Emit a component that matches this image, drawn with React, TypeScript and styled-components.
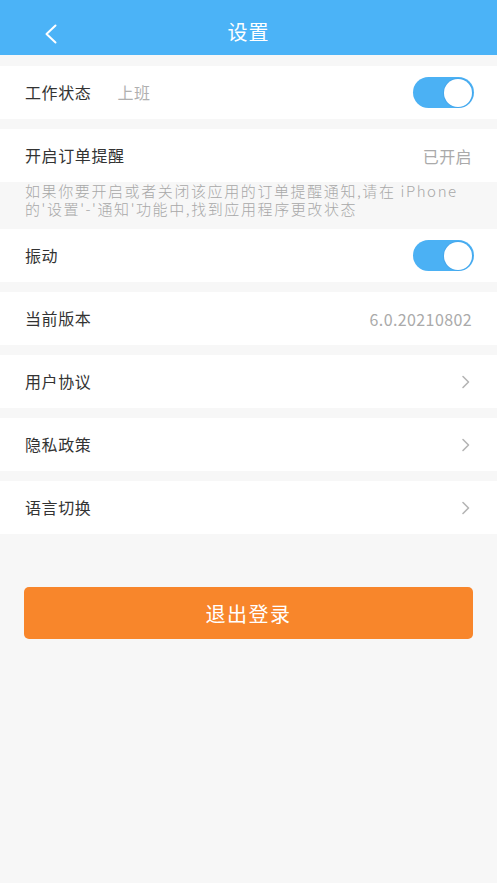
import styled, { createGlobalStyle } from 'styled-components'

const GlobalStyle = createGlobalStyle`
  html, body {
    margin: 0;
    padding: 0;
    background: #f7f7f7;
    font-family: 'Noto Sans CJK SC', 'Noto Sans', sans-serif;
  }
`

const Page = styled.div`
  width: 497px;
  min-height: 883px;
  background: #f7f7f7;
  display: flex;
  flex-direction: column;
`

const Header = styled.header`
  height: 55px;
  background: #4bb3f7;
  display: flex;
  align-items: center;
  justify-content: center;
  position: relative;
  color: #fff;
`

const BackButton = styled.button`
  position: absolute;
  left: 38px;
  top: 19px;
  width: 26px;
  height: 30px;
  border: none;
  background: transparent;
  padding: 0;
  display: flex;
  align-items: center;
  justify-content: center;
`

const Title = styled.h1`
  margin: 0;
  font-size: 20px;
  font-weight: 400;
  line-height: 1;
  padding-top: 8px;
  letter-spacing: 1px;
`

const List = styled.div`
  display: flex;
  flex-direction: column;
  padding-top: 11px;
  gap: 10px;
`

const Group = styled.div`
  display: flex;
  flex-direction: column;
`

const Row = styled.div`
  height: 53px;
  background: #fff;
  display: flex;
  align-items: center;
  padding: 0 25px;
`

const Label = styled.span`
  font-size: 16px;
  color: #333;
  letter-spacing: 0.6px;
  margin-top: -1px;
`

const SubValue = styled.span`
  font-size: 16px;
  color: #b0b0b0;
  margin-left: 26px;
  letter-spacing: 0.6px;
  margin-top: -1px;
`

const Value = styled.span`
  margin-left: auto;
  font-size: 16px;
  color: #aaa;
  letter-spacing: 0.4px;
`

const Note = styled.p`
  margin: 0;
  padding: 0 25px 11px;
  font-size: 15px;
  line-height: 18px;
  color: #a8a8a8;
  font-weight: 300;
  letter-spacing: 1.6px;
`

const Switch = styled.div<{ $on: boolean }>`
  margin-left: auto;
  margin-right: -2px;
  width: 61px;
  height: 31px;
  border-radius: 16px;
  background: ${p => (p.$on ? '#4bb1f4' : '#ddd')};
  display: flex;
  align-items: center;
  justify-content: ${p => (p.$on ? 'flex-end' : 'flex-start')};
  padding: 0 2px;
  box-sizing: border-box;
`

const Knob = styled.div`
  width: 28px;
  height: 28px;
  border-radius: 50%;
  background: #fff;
  box-shadow: 0 0 0 1px rgba(60, 150, 220, 0.35);
`

const Chevron = styled.svg`
  margin-left: auto;
  margin-right: 1px;
`

const LogoutButton = styled.button`
  margin: 53px 24px 0;
  height: 52px;
  border: none;
  border-radius: 5px;
  background: #f8862b;
  color: #fff;
  font-family: 'Noto Sans CJK SC', 'Noto Sans', sans-serif;
  font-size: 20px;
  letter-spacing: 1.5px;
`

const Arrow = () => (
  <Chevron width="10" height="14" viewBox="0 0 10 14">
    <path d="M2 1.5 L7.5 7 L2 12.5" fill="none" stroke="#b5b5b5" strokeWidth="1.6" strokeLinecap="round" strokeLinejoin="round" />
  </Chevron>
)

const Toggle = ({ on }: { on: boolean }) => (
  <Switch $on={on}>
    <Knob />
  </Switch>
)

const App = () => {
  return (
    <Page>
      <GlobalStyle />
      <Header>
        <BackButton>
          <svg width="14" height="20" viewBox="0 0 14 20">
            <path d="M11.5 1.5 L2.5 10 L11.5 18.5" fill="none" stroke="#fff" strokeWidth="2" strokeLinecap="round" strokeLinejoin="round" />
          </svg>
        </BackButton>
        <Title>设置</Title>
      </Header>
      <List>
        <Row>
          <Label>工作状态</Label>
          <SubValue>上班</SubValue>
          <Toggle on />
        </Row>
        <Group>
          <Row>
            <Label>开启订单提醒</Label>
            <Value>已开启</Value>
          </Row>
          <Note>
            如果你要开启或者关闭该应用的订单提醒通知,请在 iPhone的'设置'-'通知'功能中,找到应用程序更改状态
          </Note>
          <Row>
            <Label>振动</Label>
            <Toggle on />
          </Row>
        </Group>
        <Row>
          <Label>当前版本</Label>
          <Value>6.0.20210802</Value>
        </Row>
        <Row>
          <Label>用户协议</Label>
          <Arrow />
        </Row>
        <Row>
          <Label>隐私政策</Label>
          <Arrow />
        </Row>
        <Row>
          <Label>语言切换</Label>
          <Arrow />
        </Row>
      </List>
      <LogoutButton>退出登录</LogoutButton>
    </Page>
  )
}

export default App
